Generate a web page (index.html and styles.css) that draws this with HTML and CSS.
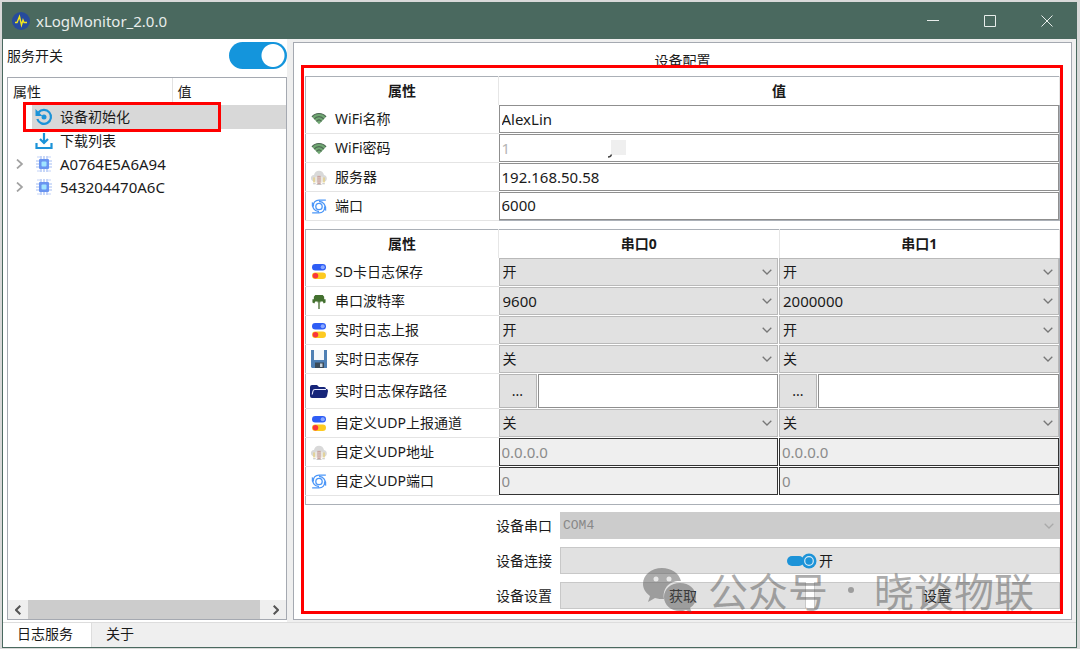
FILE: index.html
```html
<!DOCTYPE html>
<html lang="zh-CN">
<head>
<meta charset="utf-8">
<title>xLogMonitor_2.0.0</title>
<link rel="stylesheet" href="styles.css">
</head>
<body>
<svg class="defs" aria-hidden="true">
  <symbol id="chev" viewBox="0 0 10 6"><path d="M.7 .8 5 5 9.300 .8" fill="none" stroke="currentColor" stroke-width="1.300"/></symbol>
  <symbol id="wifi" viewBox="0 0 20 16"><path d="M2.500 6C6 1.500 14 1.500 17.500 6L10 14Z" fill="#71a873"/><path d="M2.500 6.200C6 1.500 14 1.500 17.500 6.200M4.800 8.600c3-3.400 7.400-3.400 10.400 0M7.300 11c2-2 3.400-2 5.400 0" fill="none" stroke="#4c6652" stroke-width="1.300"/></symbol>
  <symbol id="cloud" viewBox="0 0 20 18"><path d="M4 14C-1 13-1 6 4 6 5-1 15-1 16 6c5 1 4 8 0 8Z" fill="#d9d9d9"/><path d="M4 9v6M16 9v6" stroke="#e8cf7c" stroke-width="1.600"/><path d="M6.500 8v8M13.500 8v8" stroke="#f1ece0" stroke-width="1.600"/><path d="M10 7v10" stroke="#c9a49d" stroke-width="4"/><path d="M8 9.500h4M8 12h4M8 14.500h4" stroke="#e5d9d6"/><path d="M3 16.500h3M14 16.500h3M7 17.500h6" stroke="#b5b5b5"/></symbol>
  <symbol id="port" viewBox="0 0 16 16"><g fill="none" stroke="#4c97f8" stroke-width="1.400"><circle cx="8" cy="8" r="3.400"/><path d="M15.300 1.200H8C4 1.200 1.500 4 2 8M1 3.500C0 9 3.500 13.500 8 13.300M.7 14.800H8c4 0 6.500-2.800 6-6.800M15 12.500C16 7 12.500 2.500 8 2.700"/></g></symbol>
  <symbol id="switches" viewBox="0 0 13 14"><rect width="13" height="6" rx="3" fill="#2e5df5"/><circle cx="10" cy="3" r="1.900" fill="#8aa8ff"/><rect y="8" width="13" height="6" rx="3" fill="#fdca21"/><circle cx="3.200" cy="11" r="2.600" fill="#f9363d"/></symbol>
  <symbol id="baud" viewBox="0 0 14 16"><path d="M3 1h8l1.500 2v2.500H14V9l-2 1-1-2H8.500v1h-3V8H3L2 10 0 9V5.500h1.500V3Z" fill="#43702f"/><path d="M7 8v8" stroke="#6c8a5c" stroke-width="1.800"/></symbol>
  <symbol id="disk" viewBox="0 0 16 18"><path d="M0 0h16v18H1L0 17Z" fill="#4e7fb4"/><path d="M3 0h10v10H3Z" fill="#f4f7fb"/><path d="M4 12.500h9V18H4Z" fill="#3b4a58"/><path d="M9 13.500h2.500V17H9Z" fill="#c4d0da"/></symbol>
  <symbol id="folder" viewBox="0 0 18 15"><path d="M0 3Q0 1 2 1h5l2 2h5q2 0 2 2h.5q1.500 0 1.500 2l-1 5q-.5 2-2.500 2H2q-2 0-2-2Z" fill="#162579"/><path d="M2.200 10.500 3 7q.3-1.500 2-1.500h11" fill="none" stroke="#e6e9ff" stroke-width="1.100"/></symbol>
  <symbol id="chip" viewBox="0 0 18 18"><path d="M6 1v16M9 1v16M12 1v16M1 6h16M1 9h16M1 12h16" stroke="#a3bdf4" stroke-width="1.200"/><path d="M2 2h4M2 16h4M12 2h4M12 16h4" stroke="#c3d3f8" stroke-width="1"/><rect x="4" y="4" width="10" height="10" rx="1" fill="#6a94f0"/><rect x="6.500" y="6.500" width="5" height="5" rx="1" fill="#a0e4ff"/></symbol>
</svg>
<div class="window">
  <header class="titlebar">
    <svg class="app-icon" viewBox="0 0 18 18"><circle cx="9" cy="9" r="9" fill="#264b9c"/><path d="M3 10.500h2L7.500 4.500 9.500 13l1.500-5 1 2.500h3" fill="none" stroke="#f2e51f" stroke-width="1.400"/></svg>
    <h1>xLogMonitor_2.0.0</h1>
    <button class="win-btn" aria-label="最小化"><svg viewBox="0 0 12 12"><path d="M0 5.500h12"/></svg></button>
    <button class="win-btn" aria-label="最大化"><svg viewBox="0 0 12 12"><path d="M.5 .5h11v11H.5Z"/></svg></button>
    <button class="win-btn" aria-label="关闭"><svg viewBox="0 0 12 12"><path d="M.5 .5l11 11M11.500 .5l-11 11"/></svg></button>
  </header>
  <main class="content">
    <section class="side">
      <div class="service"><label for="svc">服务开关</label><input class="toggle" id="svc" type="checkbox" checked></div>
      <div class="tree">
        <table class="tree-table">
          <thead><tr><th class="tree-name">属性</th><th>值</th></tr></thead>
          <tbody>
            <tr><td colspan="2"><div class="node selected"><span class="twist"></span><svg class="node-icon" viewBox="0 0 18 18"><path d="M3.500 4.500a7 7 0 1 1-1.200 6.500" fill="none" stroke="#1c93d8" stroke-width="2.200"/><path d="M.5 1v7h7Z" fill="#1c93d8"/><circle cx="9" cy="9" r="2.500" fill="#1c93d8"/></svg>设备初始化</div></td></tr>
            <tr><td colspan="2"><div class="node"><span class="twist"></span><svg class="node-icon" viewBox="0 0 18 18"><path d="M9 1v10M5 7l4 4 4-4M1.500 11v5h15v-5" fill="none" stroke="#1c93d8" stroke-width="2.200"/></svg>下载列表</div></td></tr>
            <tr><td colspan="2"><div class="node latin"><svg class="twist" viewBox="0 0 22 10"><path d="M9 .5 14 5 9 9.500" fill="none" stroke="#a2a2a2" stroke-width="1.700"/></svg><svg class="node-icon"><use href="#chip"/></svg>A0764E5A6A94</div></td></tr>
            <tr><td colspan="2"><div class="node latin"><svg class="twist" viewBox="0 0 22 10"><path d="M9 .5 14 5 9 9.500" fill="none" stroke="#a2a2a2" stroke-width="1.700"/></svg><svg class="node-icon"><use href="#chip"/></svg>543204470A6C</div></td></tr>
          </tbody>
        </table>
        <div class="highlight"></div>
        <div class="scrollbar">
          <button aria-label="向左"><svg viewBox="0 0 6 10"><path d="M5.300 .7 1 5l4.300 4.300"/></svg></button>
          <span class="thumb"></span>
          <button aria-label="向右"><svg viewBox="0 0 6 10"><path d="M.7 .7 5 5 .7 9.300"/></svg></button>
        </div>
      </div>
    </section>
    <section class="config">
      <h2>设备配置</h2>
      <table class="grid">
        <colgroup><col class="name-col"><col></colgroup>
        <thead><tr><th>属性</th><th>值</th></tr></thead>
        <tbody>
          <tr><td><label class="prop" for="ssid"><svg><use href="#wifi"/></svg>WiFi名称</label></td><td><input id="ssid" value="AlexLin"></td></tr>
          <tr><td><label class="prop" for="pwd"><svg><use href="#wifi"/></svg>WiFi密码</label></td><td class="masked"><input class="faint" id="pwd" value="1"><svg class="smudge" viewBox="0 0 22 18"><path d="M4 0h15v15H4Z" fill="#efefef"/><path d="M1 17q3 0 3.500-2.500" fill="none" stroke="#444" stroke-width="1.300"/></svg></td></tr>
          <tr><td><label class="prop" for="srv"><svg><use href="#cloud"/></svg>服务器</label></td><td><input id="srv" value="192.168.50.58"></td></tr>
          <tr><td><label class="prop" for="port-no"><svg><use href="#port"/></svg>端口</label></td><td><input id="port-no" value="6000"></td></tr>
        </tbody>
      </table>
      <table class="grid serial">
        <colgroup><col class="name-col"><col><col></colgroup>
        <thead><tr><th>属性</th><th>串口0</th><th>串口1</th></tr></thead>
        <tbody>
          <tr><td><span class="prop"><svg><use href="#switches"/></svg>SD卡日志保存</span></td><td><div class="combo"><select aria-label="SD卡日志保存 串口0"><option>开</option></select><svg><use href="#chev"/></svg></div></td><td><div class="combo"><select aria-label="SD卡日志保存 串口1"><option>开</option></select><svg><use href="#chev"/></svg></div></td></tr>
          <tr><td><span class="prop"><svg><use href="#baud"/></svg>串口波特率</span></td><td><div class="combo latin"><select aria-label="串口波特率 串口0"><option>9600</option></select><svg><use href="#chev"/></svg></div></td><td><div class="combo latin"><select aria-label="串口波特率 串口1"><option>2000000</option></select><svg><use href="#chev"/></svg></div></td></tr>
          <tr><td><span class="prop"><svg><use href="#switches"/></svg>实时日志上报</span></td><td><div class="combo"><select aria-label="实时日志上报 串口0"><option>开</option></select><svg><use href="#chev"/></svg></div></td><td><div class="combo"><select aria-label="实时日志上报 串口1"><option>开</option></select><svg><use href="#chev"/></svg></div></td></tr>
          <tr><td><span class="prop"><svg class="tall"><use href="#disk"/></svg>实时日志保存</span></td><td><div class="combo"><select aria-label="实时日志保存 串口0"><option>关</option></select><svg><use href="#chev"/></svg></div></td><td><div class="combo"><select aria-label="实时日志保存 串口1"><option>关</option></select><svg><use href="#chev"/></svg></div></td></tr>
          <tr class="path-row"><td><span class="prop"><svg class="wide"><use href="#folder"/></svg>实时日志保存路径</span></td><td><div class="path"><button>...</button><input aria-label="保存路径 串口0"></div></td><td><div class="path"><button>...</button><input aria-label="保存路径 串口1"></div></td></tr>
          <tr><td><span class="prop"><svg><use href="#switches"/></svg>自定义UDP上报通道</span></td><td><div class="combo"><select aria-label="自定义UDP上报通道 串口0"><option>关</option></select><svg><use href="#chev"/></svg></div></td><td><div class="combo"><select aria-label="自定义UDP上报通道 串口1"><option>关</option></select><svg><use href="#chev"/></svg></div></td></tr>
          <tr><td><span class="prop"><svg><use href="#cloud"/></svg>自定义UDP地址</span></td><td><input disabled value="0.0.0.0" aria-label="自定义UDP地址 串口0"></td><td><input disabled value="0.0.0.0" aria-label="自定义UDP地址 串口1"></td></tr>
          <tr><td><span class="prop"><svg><use href="#port"/></svg>自定义UDP端口</span></td><td><input disabled value="0" aria-label="自定义UDP端口 串口0"></td><td><input disabled value="0" aria-label="自定义UDP端口 串口1"></td></tr>
        </tbody>
        <tfoot><tr><td colspan="3"></td></tr></tfoot>
      </table>
      <div class="form">
        <label for="com">设备串口</label>
        <div class="combo off"><select id="com" disabled><option>COM4</option></select><svg><use href="#chev"/></svg></div>
        <label for="link">设备连接</label>
        <button class="btn" id="link"><svg viewBox="0 0 30 16"><rect y="3" width="17" height="10" rx="5" fill="#1c93d8"/><circle cx="22" cy="8" r="7.500" fill="#1c93d8"/><circle cx="22" cy="8" r="4.300" fill="none" stroke="#d5e9f5" stroke-width="1.200"/></svg>开</button>
        <label for="get">设备设置</label>
        <div class="pair"><button class="btn" id="get">获取</button><button class="btn">设置</button></div>
      </div>
      <div class="frame"></div>
      <div class="watermark">
        <svg viewBox="0 0 56 46"><path d="M20 1C9 1 1 8 1 17c0 5 3 9 7 12l-2 6 7-4c3 1 6 1 9 1C20 20 29 13 39 14 37 6 29 1 20 1Z"/><path d="M38 16c-9 0-16 6-16 14s7 14 16 14c2 0 4 0 6-1l6 3-2-5c4-3 6-6 6-11 0-8-7-14-16-14Z"/><circle class="eye" cx="14" cy="12" r="2.500"/><circle class="eye" cx="27" cy="12" r="2.500"/></svg>
        <span>公众号</span><i></i><span>晓谈物联</span>
      </div>
    </section>
  </main>
  <nav class="tabs"><button class="tab active">日志服务</button><button class="tab">关于</button></nav>
</div>
</body>
</html>
```
FILE: styles.css
```css
* { box-sizing: border-box; }
body {
  margin: 0;
  min-height: 100vh;
  padding: 2px 3px 1px 2px;
  display: flex;
  background: #d9d9d9;
  color: #1a1a1a;
  font: 14px/20px "Noto Sans", "Noto Sans CJK SC", sans-serif;
}
button, input, select { font: inherit; color: inherit; margin: 0; padding: 0; border-radius: 0; }
table { border-collapse: collapse; border-spacing: 0; width: 100%; table-layout: fixed; }
th, td { padding: 0; }
.defs { position: absolute; width: 0; height: 0; }
.latin, .grid input { font-size: 15px; }
.window { flex: 1; display: flex; flex-direction: column; background: #fff; border: 1px solid #4a695f; }

.titlebar { display: flex; align-items: center; height: 36px; padding-left: 9px; background: #4a695f; color: #e8edeb; }
.titlebar h1 { flex: 1; margin: 0 0 0 6px; font-size: 15px; font-weight: 400; }
.app-icon { width: 18px; height: 18px; }
.win-btn { width: 57px; height: 36px; padding-right: 2px; border: 0; background: none; }
.win-btn svg { width: 12px; height: 12px; display: block; margin: auto; fill: none; stroke: #e8edeb; stroke-width: 1; }

.content { flex: 1; display: grid; grid-template-columns: 280px 1fr; gap: 6px; padding: 3px 4px 2px; background: linear-gradient(90deg, #fff 284px, #efefef 284px); }
.side { display: flex; flex-direction: column; background: #fff; }
.service { display: flex; align-items: center; justify-content: space-between; height: 35px; padding-bottom: 8px; }
.toggle { appearance: none; width: 58px; height: 27px; border-radius: 14px; background: radial-gradient(circle at 44px 50%, #fff 11px, transparent 12px) #1495dc; }
.tree { flex: 1; display: flex; flex-direction: column; border: 1px solid #a5a9b1; position: relative; }
.highlight { position: absolute; left: 15px; top: 24px; width: 198px; height: 30px; border: 3px solid #f00; }
.tree-table th { height: 27px; padding: 1px 0 0 5px; text-align: left; font-weight: 400; }
.tree-table th.tree-name { width: 164px; border-right: 1px solid #e2e2e2; }
.node { display: flex; align-items: center; height: 23px; }
.node.selected { background: linear-gradient(90deg, transparent 24px, #d8d8d8 24px); height: 24px; }
.twist { width: 22px; height: 10px; margin-right: 5px; }
.node-icon { width: 18px; height: 18px; margin-right: 7px; }
.scrollbar { display: grid; grid-template-columns: 20px 1fr 26px; height: 19px; margin-top: auto; background: #efefef; }
.scrollbar button { border: 0; background: none; padding: 0 7px; text-align: right; }
.scrollbar svg { width: 6px; height: 10px; display: block; margin-left: auto; fill: none; stroke: #555; stroke-width: 2; }
.thumb { background: #ccc; }

.config { position: relative; padding: 8px 11px 0; background: #fff; border: 1px solid #a5a9b1; }
.config h2 { margin: 0; height: 25px; text-align: center; font-size: 14px; font-weight: 400; }
.grid { border: 1px solid #abb0b7; }
.grid + .grid { margin-top: 8px; }
.name-col { width: 193px; }
.grid th { height: 28px; font-size: 14px; font-weight: 700; border-right: 1px solid #e6e6e6; }
.grid tbody td { height: 29px; }
.grid tbody td:first-child { border-bottom: 1px solid #e4e4e4; }
.grid .path-row td { height: 35px; }
.grid tfoot td { height: 9px; }
.serial tbody td:nth-child(2) { padding-right: 1px; }
.prop { display: flex; align-items: center; gap: 6px; padding-left: 3px; }
.prop svg { width: 20px; height: 15px; }
.prop .tall { height: 18px; }
.prop .wide { padding: 0 1px; }
.grid input { display: block; width: 100%; height: 28px; padding: 0 2px 1px; border: 1px solid #8f8f8f; background: #fff; outline: 0; }
.grid input:disabled { background: #efefef; border-color: #333; color: #8b8b8b; }
.grid .faint { color: #b5b5b5; }
.masked { position: relative; }
.smudge { position: absolute; left: 108px; top: 6px; width: 22px; height: 18px; }
.combo { display: grid; align-items: center; }
.combo select { grid-area: 1 / 1; appearance: none; width: 100%; height: 28px; padding: 0 3px; border: 1px solid #b9b9b9; background: #e1e1e1; }
.combo svg { grid-area: 1 / 1; justify-self: end; width: 10px; height: 6px; margin-right: 6px; color: #777; pointer-events: none; }
.path { display: flex; gap: 1px; }
.path button { width: 38px; height: 34px; border: 1px solid #b5b5b5; background: #e1e1e1; }
.path input { flex: 1; min-width: 0; height: 34px; }

.form { display: grid; grid-template-columns: 247px 1fr; column-gap: 8px; row-gap: 8px; padding-top: 7px; align-items: center; }
.form label { text-align: right; }
.combo.off select { height: 27px; border: 0; background: #ccc; color: #888; opacity: 1; font: 13px "Liberation Mono", monospace; }
.combo.off svg { color: #aaa; }
.btn { display: flex; align-items: center; justify-content: center; width: 100%; height: 27px; border: 1px solid #c8c8c8; background: #e1e1e1; }
.btn svg { width: 30px; height: 16px; margin-right: 2px; }
.pair { display: grid; grid-template-columns: 1fr 1fr; gap: 8px; }
.frame { position: absolute; inset: 22px 8px 5px 7px; border: 3px solid #f00; pointer-events: none; }
.watermark { position: absolute; right: 37px; bottom: 5px; display: flex; align-items: center; color: rgba(90, 90, 90, .5); font: 400 40px/48px "Noto Sans CJK SC", sans-serif; pointer-events: none; white-space: nowrap; }
.watermark svg { width: 56px; height: 46px; margin-right: 10px; fill: rgba(90, 90, 90, .5); }
.watermark .eye { fill: #e8e8e8; }
.watermark i { width: 6px; height: 6px; margin: 0 20px; border-radius: 50%; background: currentColor; }

.tabs { display: flex; height: 25px; background: #efefef; border-top: 1px solid #ddd; }
.tab { padding: 0 14px 2px; border: 0; background: none; border-left: 1px solid #ddd; }
.tab.active { padding-right: 18px; background: #fff; border: 0; }
```
